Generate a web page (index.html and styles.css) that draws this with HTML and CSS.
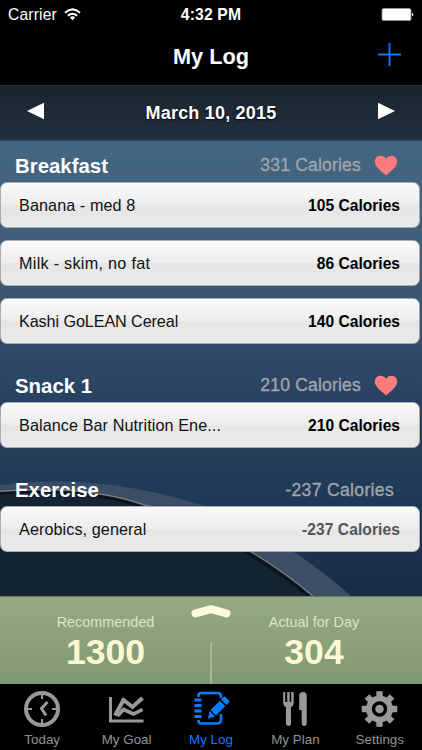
FILE: index.html
```html
<!DOCTYPE html>
<html lang="en">
<head>
<meta charset="utf-8">
<title>My Log</title>
<link rel="stylesheet" href="styles.css">
</head>
<body>
<div class="app">
  <header class="status">
    <span class="carrier">Carrier
      <svg class="wifi" width="17" height="13" viewBox="0 0 17 13"><g fill="none" stroke="#fff" stroke-width="2"><path d="M1 4.7Q8.5-1.9 16 4.7"/><path d="M3.9 7.8Q8.5 3.7 13.1 7.8"/></g><path d="M5.8 9.4Q8.5 7.2 11.2 9.4L8.5 12.2Z" fill="#fff"/></svg>
    </span>
    <span class="time">4:32 PM</span>
    <svg class="battery" width="33" height="13" viewBox="0 0 33 13"><rect x="1" y=".5" width="29" height="12" rx="1.6" fill="#fff" stroke="#999" stroke-width=".7"/><path d="M31 4.500Q33.500 6.500 31 8.500Z" fill="#fff"/></svg>
  </header>
  <nav class="navbar">
    <span></span>
    <h1>My Log</h1>
    <svg class="plus" width="23" height="23" viewBox="0 0 23 23"><path d="M11.500 0V23M0 11.500H23" stroke="#087bf3" stroke-width="1.900"/></svg>
  </nav>
  <div class="datebar">
    <svg width="18" height="18" viewBox="0 0 18 18"><path d="M0 9L17 .7V17.3Z" fill="#fff"/></svg>
    <span class="date">March 10, 2015</span>
    <svg width="18" height="18" viewBox="0 0 18 18"><path d="M18 9L1 .7V17.3Z" fill="#fff"/></svg>
  </div>
  <main class="log">
    <svg class="backdrop" viewBox="0 140 422 456" preserveAspectRatio="none">
      <path d="M0 485C55 478 120 479 205 506C245 520 300 550 352 597H314C285 572 265 560 250 551C215 530 180 517 148 506C110 492 60 486 0 491Z" fill="#3b4e65"/>
      <path d="M0 491C60 486 110 492 148 506C180 517 215 530 250 551C265 560 285 572 314 597H0Z" fill="#142433"/>
      <path d="M0 493C60 488 108 494 146 508C178 519 213 532 248 553C263 562 282 574 310 597" fill="none" stroke="#0b141d" stroke-width="3"/>
      <path d="M0 491C60 486 110 492 148 506C180 517 215 530 250 551C265 560 285 572 314 597" fill="none" stroke="#7c7c7c" stroke-width="1.400"/>
    </svg>
    <section class="meal">
      <div class="head"><h2>Breakfast</h2><span class="total">331 Calories</span><svg class="heart" width="24" height="21" viewBox="0 0 24 21"><path d="M12 20.5C9 17.5.8 12.5.8 6.6C.8 3.2 3.2.8 6.3.8C8.7.8 10.8 2 12 3.8C13.2 2 15.3.8 17.7.8C20.8.8 23.2 3.2 23.2 6.6C23.2 12.5 15 17.5 12 20.5Z" fill="#fe7b7d"/></svg></div>
      <ul>
        <li><span>Banana - med 8</span><b>105 Calories</b></li>
        <li><span class="loose">Milk - skim, no fat</span><b>86 Calories</b></li>
        <li><span class="snug">Kashi GoLEAN Cereal</span><b>140 Calories</b></li>
      </ul>
    </section>
    <section class="meal snack">
      <div class="head"><h2>Snack 1</h2><span class="total">210 Calories</span><svg class="heart" width="24" height="21" viewBox="0 0 24 21"><path d="M12 20.5C9 17.5.8 12.5.8 6.6C.8 3.2 3.2.8 6.3.8C8.7.8 10.8 2 12 3.8C13.2 2 15.3.8 17.7.8C20.8.8 23.2 3.2 23.2 6.6C23.2 12.5 15 17.5 12 20.5Z" fill="#fe7b7d"/></svg></div>
      <ul>
        <li><span>Balance Bar Nutrition Ene...</span><b>210 Calories</b></li>
      </ul>
    </section>
    <section class="meal exercise">
      <div class="head"><h2>Exercise</h2><span class="total">-237 Calories</span></div>
      <ul>
        <li><span>Aerobics, general</span><b class="burned">-237 Calories</b></li>
      </ul>
    </section>
  </main>
  <section class="summary">
    <div class="stat"><span>Recommended</span><strong>1300</strong></div>
    <div class="stat actual"><span>Actual for Day</span><strong>304</strong></div>
    <i class="divider"></i>
    <svg class="handle" width="40" height="14" viewBox="0 0 40 14"><path d="M4.500 9.300L20 5.200L35.500 9.300" fill="none" stroke="#fdfbdc" stroke-width="8" stroke-linecap="round"/></svg>
  </section>
  <footer class="tabs">
    <div class="tab"><svg width="38" height="38" viewBox="0 0 38 38"><g fill="none" stroke="#999"><circle cx="19" cy="19" r="16" stroke-width="4"/><path d="M19 4V9M19 29V34M4 19H9M29 19H34" stroke-width="2"/><path d="M24.500 12L18.500 18.500L23 25.500" stroke-width="3"/></g></svg><span>Today</span></div>
    <div class="tab"><svg width="38" height="38" viewBox="1.500 0 38 38"><g fill="none" stroke="#999"><path d="M4 7V31H37" stroke-width="3"/><path d="M8.500 25.500L17 10L26 17L36 8" stroke-width="4"/><path d="M11 26L17 19.500L27 24L36 19.500" stroke-width="3.600"/></g></svg><span>My Goal</span></div>
    <div class="tab active"><svg width="38" height="38" viewBox=".5 0 38 38"><path d="M7 7V5Q7 3 10 3H26Q29.500 3 29.500 6V8M29.500 24V29Q29.500 33.500 26 33.500H10Q7 33.500 7 31V30" fill="none" stroke="#087bff" stroke-width="2.500"/><path d="M3 10H10M3 15.500H10M3 21H10M3 26.500H10" stroke="#087bff" stroke-width="3"/><path d="M29.500 9.500L35 15L37.500 12.500Q38.500 11.500 37.500 10.500L34 7Q33 6 32 7ZM28.300 10.700L33.800 16.200L24.500 25.500L19 20ZM18 21L23.500 26.500L16.500 28.500Z" fill="#087bff"/></svg><span>My Log</span></div>
    <div class="tab"><svg width="38" height="38" viewBox=".8 0 38 38"><path d="M8 2H10V12H12V2H14.500V12H16V2H18.500V13Q18.500 16 15.800 17V33Q15.800 36 13.200 36Q10.700 36 10.700 33V17Q8 16 8 13ZM24 5Q24 2 28 2Q31.500 2 31.500 6V33Q31.500 36 29 36Q26.500 36 26.500 33V20H24Z" fill="#999"/></svg><span>My Plan</span></div>
    <div class="tab"><svg width="38" height="38" viewBox=".5 0 38 38"><g fill="#999"><circle cx="19" cy="19" r="13.500"/><g id="teeth"><path d="M15.800 1.200H22.200V36.800H15.800Z"/><path d="M1.200 15.800V22.200H36.800V15.800Z"/></g><use href="#teeth" transform="rotate(45 19 19)"/></g><circle cx="19" cy="19" r="6" fill="#999" stroke="#000" stroke-width="3.400"/></svg><span>Settings</span></div>
  </footer>
</div>
</body>
</html>
```
FILE: styles.css
```css
* { box-sizing: border-box; }
body { margin: 0; background: #000; font-family: "Liberation Sans", Arial, sans-serif; }
h1, h2, ul { margin: 0; padding: 0; }
svg { display: block; flex: none; }
.app { width: 422px; height: 750px; display: flex; flex-direction: column; overflow: hidden; background: #000; }

.status { height: 28px; flex: none; display: grid; grid-template-columns: 1fr auto 1fr; align-items: center; padding: 2px 8px 0; color: #fff; }
.carrier { display: flex; align-items: center; gap: 7px; font-size: 15.700px; letter-spacing: .15px; }
.wifi { margin-top: -2px; }
.time { font-size: 15.700px; font-weight: bold; letter-spacing: .15px; }
.battery { justify-self: end; margin-top: -1px; }

.navbar { height: 57px; flex: none; display: grid; grid-template-columns: 1fr auto 1fr; align-items: center; padding: 0 21px; }
.navbar h1 { color: #fff; font-size: 21.700px; line-height: 26px; }
.plus { justify-self: end; margin-top: -4px; }

.datebar { height: 56px; flex: none; display: flex; align-items: center; justify-content: space-between; padding: 0 27px; background: linear-gradient(#1b242c, #1d2a36 40%, #20303e); border-top: 1px solid #2b343c; border-bottom: 1px solid #30475b; }
.datebar svg { margin-top: -4px; }
.date { color: #fff; font-size: 18px; font-weight: bold; letter-spacing: .2px; text-shadow: 0 1px 2px #000; }

.log { position: relative; flex: 1; background: linear-gradient(#446681 0, #415e7b 20%, #3a5670 33%, #2f4b68 46%, #2a4363 55%, #20395a 65%, #24405a 68%, #1e3858 80%, #192c48 100%); }
.backdrop { position: absolute; left: 0; top: 0; width: 100%; height: 100%; }
.meal { position: relative; }
.head { height: 41px; display: flex; align-items: center; padding: 8px 24px 0 15px; }
.head h2 { flex: 1; color: #fff; font-size: 20.400px; line-height: 24px; }
.total { color: #a0a4a9; font-size: 17.500px; letter-spacing: .2px; -webkit-text-stroke: .35px #a0a4a9; }
.heart { margin-left: 13px; }
.snack { padding-top: 17px; }
.exercise { padding-top: 20px; }
.exercise .head { height: 38px; padding: 6px 28px 0 15px; }
.exercise .total { letter-spacing: .35px; }
.meal ul { list-style: none; display: grid; gap: 12px; }
.meal li { height: 46px; width: 420px; display: flex; align-items: center; justify-content: space-between; padding: 1px 19px 0 18px; border: 1px solid #a9adb3; border-radius: 7px; background: linear-gradient(#fafafa, #ededed 49%, #e6e6e6 51%, #e9e9e9); color: #111; font-size: 16.200px; letter-spacing: .08px; }
.meal .loose { letter-spacing: .28px; }
.meal .snug { letter-spacing: -.1px; }
.meal b { font-size: 15.600px; letter-spacing: 0; color: #000; }
.meal b.burned { color: #555; letter-spacing: .08px; }

.summary { position: relative; height: 88px; flex: none; display: grid; grid-template-columns: 1fr 1fr; border-top: 1px solid #697a68; background: linear-gradient(#94aa84, #80986f); }
.stat { display: flex; flex-direction: column; align-items: center; padding-top: 16px; }
.stat.actual { padding-right: 5px; }
.stat span { color: #dbe6cf; font-size: 14.400px; line-height: 18px; }
.stat strong { color: #fdf8d3; font-size: 35.600px; line-height: 42px; }
.divider { position: absolute; left: 210px; top: 45px; bottom: 0; width: 2px; background: #a4b696; }
.handle { position: absolute; left: 191px; top: 7px; }

.tabs { height: 66px; flex: none; display: grid; grid-template-columns: repeat(5, 1fr); background: #000; }
.tab { display: flex; flex-direction: column; align-items: center; padding-top: 6px; color: #929292; }
.tab span { font-size: 13.400px; line-height: 16px; margin-top: 4px; }
.tab.active { color: #087bff; }
```
